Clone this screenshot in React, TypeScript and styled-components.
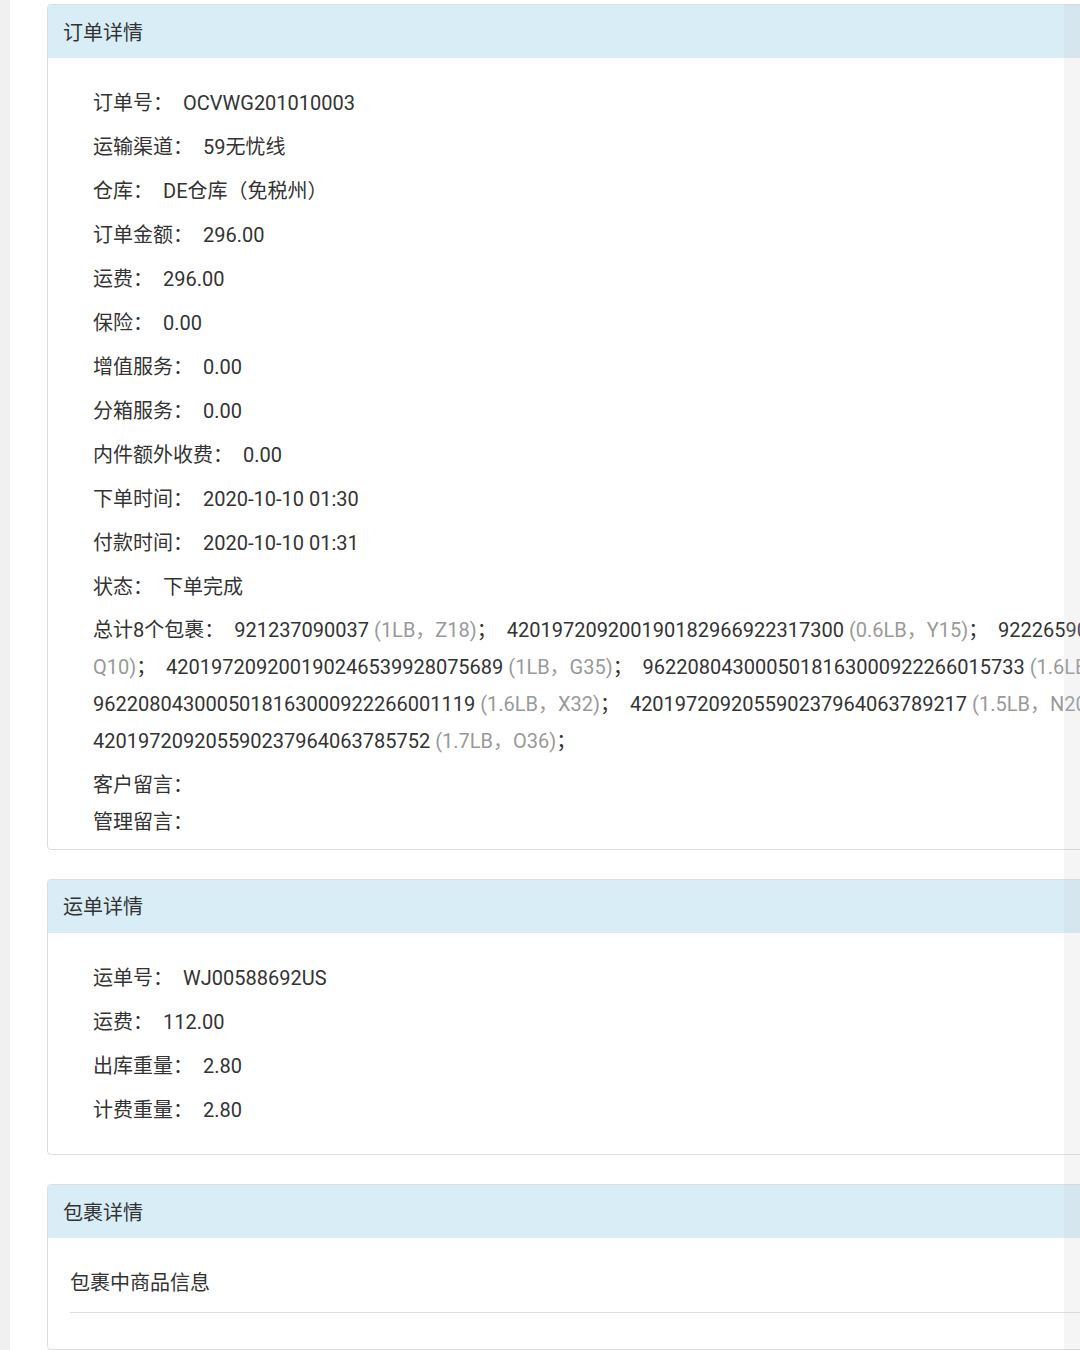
import React from "react";
import styled, { createGlobalStyle } from "styled-components";

const Global = createGlobalStyle`
  html, body { margin: 0; padding: 0; background: #fff; overflow: hidden; }
  body { font-family: Roboto, "Noto Sans CJK SC", sans-serif; color: #333; }
`;

const Page = styled.div`
  display: flex;
  width: 1080px;
  height: 1350px;
  overflow: hidden;
`;
const Strip = styled.div`
  width: 10px;
  flex-shrink: 0;
  background: #f0f0f0;
`;
const Main = styled.div`
  flex: 1;
  padding: 4px 0 0 37px;
  display: flex;
  flex-direction: column;
  gap: 29px;
  min-width: 0;
`;
const Panel = styled.section`
  width: 1200px;
  border: 1px solid #ddd;
  border-radius: 4px;
  background: #fff;
  overflow: hidden;
`;
const Head = styled.div`
  background: #d9edf7;
  height: 52px;
  padding: 0 15px;
  display: flex;
  align-items: center;
  font-size: 20px;
  color: #333;
  border-bottom: 1px solid #d9edf7;
`;
const Body = styled.div<{ $pad?: string }>`
  padding: ${(p) => p.$pad || "23px 45px 29px"};
`;
const Row = styled.div`
  font-size: 20px;
  line-height: 44px;
  white-space: nowrap;
`;
const Value = styled.span`
  margin-left: 10px;
`;
const Multi = styled.div`
  font-size: 20px;
  line-height: 37px;
  white-space: nowrap;
  margin-top: 3px;
`;
const Note = styled.div<{ $first?: boolean }>`
  font-size: 20px;
  line-height: 37px;
  margin-top: ${(p) => (p.$first ? "7px" : "0")};
`;
const Muted = styled.span`
  color: #999;
`;
const SubTitle = styled.div`
  font-size: 20px;
  line-height: 30px;
  padding-bottom: 14px;
  border-bottom: 1px solid #ddd;
`;
const Scroll = styled.div`
  position: fixed;
  top: 4px;
  right: 0;
  width: 16px;
  height: 1346px;
  background: rgba(200, 200, 200, 0.18);
`;

const pkgs: [string, string][] = [
  ["921237090037", "(1LB，Z18)"],
  ["420197209200190182966922317300", "(0.6LB，Y15)"],
  ["9222659000", "(1.2LB，"],
];

export default function App() {
  return (
    <Page>
      <Global />
      <Strip />
      <Main>
        <Panel>
          <Head>订单详情</Head>
          <Body>
            <Row>订单号：<Value>OCVWG201010003</Value></Row>
            <Row>运输渠道：<Value>59无忧线</Value></Row>
            <Row>仓库：<Value>DE仓库（免税州）</Value></Row>
            <Row>订单金额：<Value>296.00</Value></Row>
            <Row>运费：<Value>296.00</Value></Row>
            <Row>保险：<Value>0.00</Value></Row>
            <Row>增值服务：<Value>0.00</Value></Row>
            <Row>分箱服务：<Value>0.00</Value></Row>
            <Row>内件额外收费：<Value>0.00</Value></Row>
            <Row>下单时间：<Value>2020-10-10 01:30</Value></Row>
            <Row>付款时间：<Value>2020-10-10 01:31</Value></Row>
            <Row>状态：<Value>下单完成</Value></Row>
            <Multi>
              总计8个包裹：&nbsp; {pkgs[0][0]} <Muted>{pkgs[0][1]}</Muted>；&nbsp; {pkgs[1][0]} <Muted>{pkgs[1][1]}</Muted>；&nbsp; {pkgs[2][0]} <Muted>{pkgs[2][1]}</Muted>
              <br />
              <Muted>Q10)</Muted>；&nbsp; 420197209200190246539928075689 <Muted>(1LB，G35)</Muted>；&nbsp; 9622080430005018163000922266015733 <Muted>(1.6LB，</Muted>
              <br />
              9622080430005018163000922266001119 <Muted>(1.6LB，X32)</Muted>；&nbsp; 420197209205590237964063789217 <Muted>(1.5LB，N20)</Muted>
              <br />
              420197209205590237964063785752 <Muted>(1.7LB，O36)</Muted>；
            </Multi>
            <Note $first>客户留言：</Note>
            <Note>管理留言：</Note>
          </Body>
        </Panel>
        <Panel>
          <Head>运单详情</Head>
          <Body>
            <Row>运单号：<Value>WJ00588692US</Value></Row>
            <Row>运费：<Value>112.00</Value></Row>
            <Row>出库重量：<Value>2.80</Value></Row>
            <Row>计费重量：<Value>2.80</Value></Row>
          </Body>
        </Panel>
        <Panel>
          <Head>包裹详情</Head>
          <Body $pad="30px 22px 40px">
            <SubTitle>包裹中商品信息</SubTitle>
          </Body>
        </Panel>
      </Main>
      <Scroll />
    </Page>
  );
}
